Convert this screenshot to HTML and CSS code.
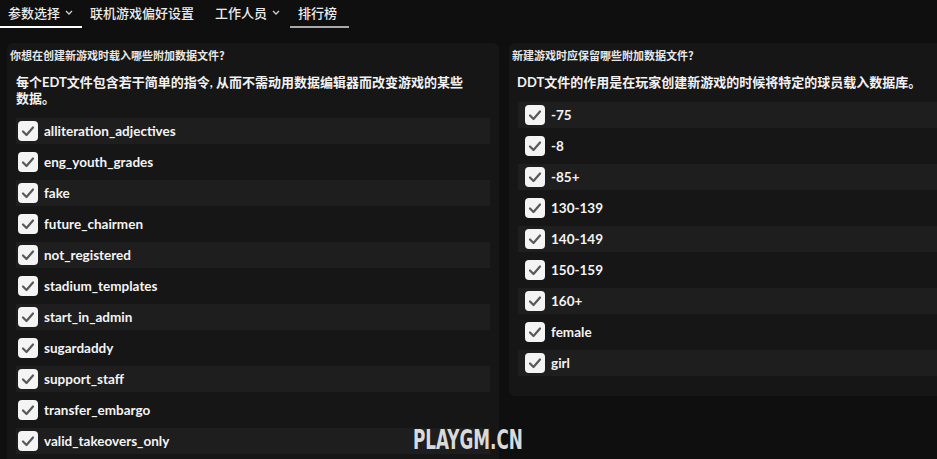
FILE: index.html
```html
<!DOCTYPE html>
<html lang="zh-CN">
<head>
  <meta charset="UTF-8">
  <meta name="viewport" content="width=device-width, initial-scale=1.0">
  <title>参数选择</title>
  <link rel="stylesheet" href="styles.css">
</head>
<body>
  <nav class="tabs">
    <div class="tab active"><span>参数选择</span><svg class="chev" viewBox="0 0 8 5"><polyline points="1,1 4,4 7,1"/></svg></div>
    <div class="tab">联机游戏偏好设置</div>
    <div class="tab staff"><span>工作人员</span><svg class="chev" viewBox="0 0 8 5"><polyline points="1,1 4,4 7,1"/></svg></div>
    <div class="tab marked">排行榜</div>
  </nav>

  <div class="main">
    <section class="panel left">
      <div class="title">你想在创建新游戏时载入哪些附加数据文件?</div>
      <p class="desc">每个EDT文件包含若干简单的指令, 从而不需动用数据编辑器而改变游戏的某些数据。</p>
      <ul class="list" id="edtList"></ul>
    </section>

    <section class="panel right">
      <div class="title">新建游戏时应保留哪些附加数据文件?</div>
      <p class="desc">DDT文件的作用是在玩家创建新游戏的时候将特定的球员载入数据库。</p>
      <ul class="list" id="ddtList"></ul>
    </section>
  </div>

  <div class="watermark">PLAYGM.CN</div>

  <script>
    const edtFiles = ['alliteration_adjectives', 'eng_youth_grades', 'fake', 'future_chairmen',
      'not_registered', 'stadium_templates', 'start_in_admin', 'sugardaddy', 'support_staff',
      'transfer_embargo', 'valid_takeovers_only'];
    const ddtFiles = ['-75', '-8', '-85+', '130-139', '140-149', '150-159', '160+', 'female', 'girl'];

    function fillList(id, names) {
      const list = document.getElementById(id);
      names.forEach(name => {
        const li = document.createElement('li');
        li.className = 'row';
        li.innerHTML = '<span class="check"><svg viewBox="0 0 20 20"><polyline points="5,10.5 8.5,14 15,6.5"/></svg></span>'
          + '<span class="label"></span>';
        li.querySelector('.label').textContent = name;
        list.appendChild(li);
      });
    }

    fillList('edtList', edtFiles);
    fillList('ddtList', ddtFiles);
  </script>
</body>
</html>
```

FILE: styles.css
```css
body {
  margin: 0;
  background-color: #0f0f0f;
  color: #f2f2f2;
  font-family: Lato, "Noto Sans CJK SC", sans-serif;
  overflow: hidden;
  height: 459px;
  position: relative;
}
.tabs {
  display: flex;
  height: 28px;
  font-size: 13px;
  font-weight: 500;
  font-family: "Noto Sans CJK SC", sans-serif;
}
.tab {
  display: flex;
  align-items: center;
  gap: 5px;
  padding: 0 9px 2px 8px;
  border-bottom: 2px solid transparent;
  color: #ececec;
}
.tab.staff {
  margin-left: 4px;
}
.tab.active {
  border-bottom-color: #ffffff;
}
.tab.marked {
  margin-left: 1px;
  border-bottom-color: #a9a9a9;
  padding-right: 12px;
}
.chev {
  width: 8px;
  height: 5px;
  fill: none;
  stroke: #d0d0d0;
  stroke-width: 1.3;
}
.main {
  display: grid;
  grid-template-columns: 492px 440px;
  gap: 10px;
  padding: 15px 0 0 7px;
  align-items: start;
}
.panel {
  background-color: #161616;
  border-radius: 6px;
  padding: 5px 9px 0;
}
.panel.left {
  height: 430px;
}
.panel.right {
  padding-bottom: 15px;
}
.title {
  font-family: "Noto Sans CJK SC", sans-serif;
  font-size: 11px;
  font-weight: bold;
  line-height: 14px;
  margin-left: -6px;
  color: #e8e8e8;
}
.desc {
  margin: 12px 0 12px 0;
  padding: 0 14px 0 0;
  font-family: Lato, "Noto Sans CJK SC", sans-serif;
  font-size: 13px;
  font-weight: bold;
  line-height: 16px;
}
.right .desc {
  margin-left: -1px;
}
.list {
  list-style: none;
  margin: 0;
  padding: 0;
}
.row {
  display: flex;
  align-items: center;
  height: 26px;
  margin-bottom: 5px;
  padding-left: 2px;
}
.right .row {
  padding-left: 7px;
}
.row:nth-child(odd) {
  background-color: #1e1e1e;
}
.check {
  width: 20px;
  height: 20px;
  border-radius: 4px;
  background-color: #f4f4f4;
  margin-right: 6px;
  display: flex;
}
.check svg {
  width: 20px;
  height: 20px;
  fill: none;
  stroke: #56585c;
  stroke-width: 2.2;
  stroke-linecap: round;
  stroke-linejoin: round;
}
.label {
  font-size: 13.5px;
  font-weight: bold;
  color: #f4f4f4;
}
.watermark {
  position: absolute;
  left: 413px;
  top: 425px;
  font-family: "DejaVu Sans Condensed", sans-serif;
  font-weight: bold;
  font-size: 26px;
  color: #dadada;
  transform: scaleX(0.72);
  transform-origin: left center;
}
```
